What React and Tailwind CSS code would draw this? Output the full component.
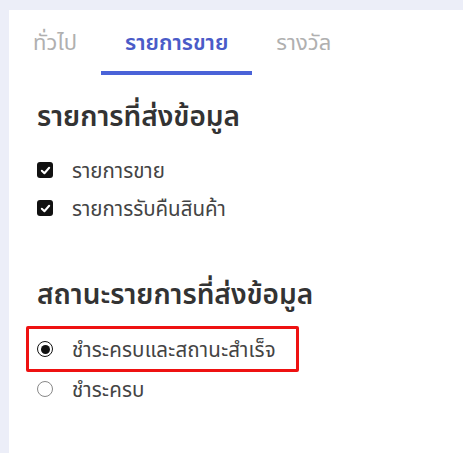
import { useState } from "react";

const tabs = ["ทั่วไป", "รายการขาย", "รางวัล"];

function CheckBox({ label }) {
  return (
    <label className="flex items-center gap-[19px] h-[38px]">
      <span className="w-[16px] h-[16px] rounded-[3px] bg-[#111] flex items-center justify-center">
        <svg width="11" height="11" viewBox="0 0 12 12" fill="none">
          <path d="M2 6.3 L4.8 9 L10 3" stroke="#fff" strokeWidth="2.2" strokeLinecap="round" strokeLinejoin="round" />
        </svg>
      </span>
      <span className="text-[20.5px] leading-[28px] text-[#444]">{label}</span>
    </label>
  );
}

function Radio({ label, checked }) {
  return (
    <label className="flex items-center gap-[19px] h-[28px]">
      <span className={`w-[16px] h-[16px] rounded-full border-[1.5px] flex items-center justify-center ${checked ? "border-[#111]" : "border-[#888]"}`}>
        {checked && <span className="w-[9px] h-[9px] rounded-full bg-[#111]" />}
      </span>
      <span className="text-[20.5px] leading-[28px] text-[#444] tracking-[0.2px]">{label}</span>
    </label>
  );
}

export default function App() {
  const [active] = useState(1);

  return (
    <div
      className="w-[463px] h-[453px] bg-[#eceef8] pl-[9px] pt-[10px] overflow-hidden"
      style={{ fontFamily: '"Noto Sans", "Noto Sans Thai", sans-serif' }}
    >
      <div className="bg-white h-full">
        {/* Tabs */}
        <div className="flex h-[65px]">
          {tabs.map((t, i) => (
            <div
              key={t}
              className={`px-[24px] pt-[2px] flex items-center justify-center text-[22px] border-b-[4px] ${
                i === active ? "border-[#4a63d8] text-[#4a5bc8] font-semibold" : "border-transparent text-[#b0b0b0]"
              }`}
            >
              {t}
            </div>
          ))}
        </div>

        <div className="pl-[28px] pt-[20px]">
          <h2 className="text-[28px] font-semibold text-[#333] leading-[40px]">รายการที่ส่งข้อมูล</h2>
          <div className="mt-[16px]">
            <CheckBox label="รายการขาย" />
            <CheckBox label="รายการรับคืนสินค้า" />
          </div>

          <h2 className="mt-[46px] text-[28px] font-semibold text-[#333] leading-[40px]">สถานะรายการที่ส่งข้อมูล</h2>
          <div className="mt-[13px] -ml-[11px] w-[273px] h-[46px] border-[3px] border-[#ee1111] rounded-[2px] pl-[8px] flex items-center">
            <Radio label="ชำระครบและสถานะสำเร็จ" checked />
          </div>
          <div className="mt-[3px]">
            <Radio label="ชำระครบ" />
          </div>
        </div>
      </div>
    </div>
  );
}
